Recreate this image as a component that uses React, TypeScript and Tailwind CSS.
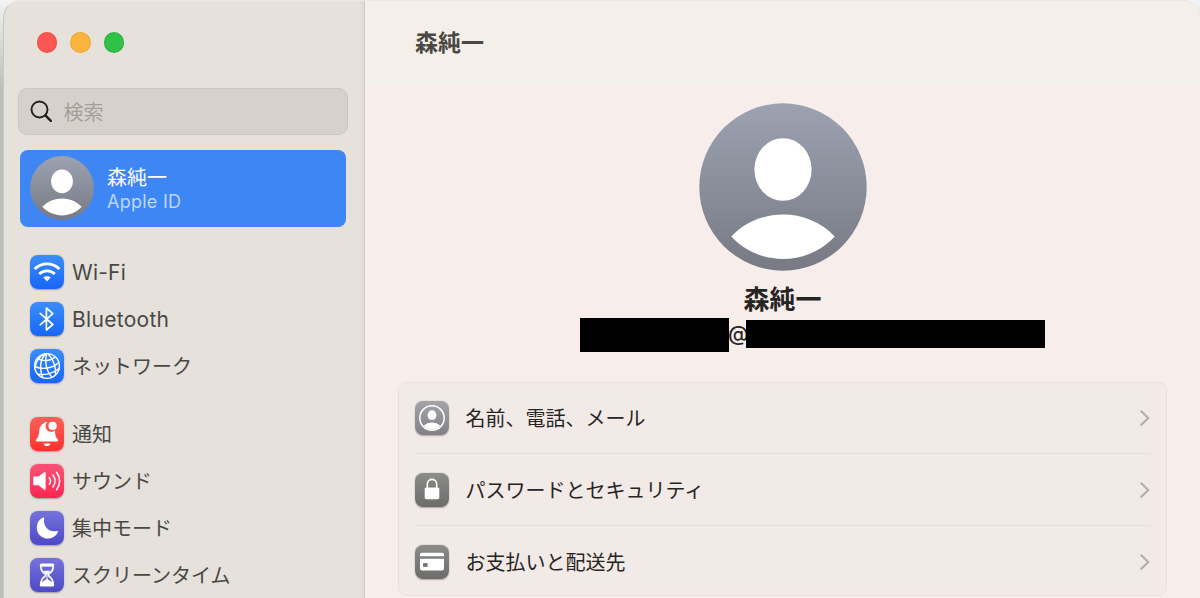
import { useId, useState } from "react";
import type { ReactNode } from "react";

type NavItem = {
  id: string;
  label: string;
  color: string;
  textStyle?: string;
  icon: ReactNode;
};

type SettingRow = {
  label: string;
  color: string;
  icon: ReactNode;
};

const blue = "from-[#3b8dfb] to-[#1766f8]";
const red = "from-[#fb5f58] to-[#fd2f2c]";
const pink = "from-[#fc5079] to-[#fc2450]";
const purple = "from-[#7672dc] to-[#4e49c6]";
const gray = "from-[#8c8c8b] to-[#6c6c6b]";

const WifiIcon = () => (
  <svg viewBox="0 0 34 34" className="size-full" fill="none" stroke="white" strokeWidth="2.8">
    <path d="M4.6 14C11.5 7.2 22.5 7.2 29.4 14" />
    <path d="M9.2 19C13.6 14.8 20.4 14.8 24.8 19" />
    <path d="M17 26.3l-3.7-3.8c2-1.7 5.4-1.7 7.4 0z" fill="white" stroke="none" />
  </svg>
);

const BluetoothIcon = () => (
  <svg viewBox="0 0 34 34" className="size-full" fill="none" stroke="white" strokeWidth="1.7" strokeLinejoin="round" strokeLinecap="round">
    <path d="M10.2 11.3l12.6 11.2L16.4 28V6l6.4 5.6-12.6 11.2" />
  </svg>
);

const GlobeIcon = () => (
  <svg viewBox="0 0 34 34" className="size-full" fill="none" stroke="white" strokeWidth="1.4">
    <circle cx="17" cy="17" r="12.4" />
    <path d="M15.8 4.7C10.5 9.5 9 18.5 12.6 28.5M16.5 4.7C14.5 12 16 22 22 28.3M18 4.7C23 10 26 17 25.5 25.5M15.5 5C9 7 5.8 12 5 19" />
    <path d="M7.5 9.2C12 12.6 20 12.5 25.2 8M4.8 17.5C12 21 23 19.5 28.7 13.5M7.5 25C14 26.5 23 25 29 19.5" />
  </svg>
);

const BellIcon = () => (
  <svg viewBox="0 0 34 34" className="size-full" fill="white">
    <path d="M17.3 5.1a5.6 5.6 0 0 0 7.6 8.3c.3 4.8 1 7.1 2.9 8.8.8.8.3 2.3-.9 2.3H7.1c-1.2 0-1.7-1.5-.9-2.3 2-1.7 2.7-4 3-8.5.3-4.1 2.6-6.600 5.100-7.600.4-1 1.500-1.500 3-1z" />
    <circle cx="22.6" cy="8.9" r="4.1" />
    <path d="M13.6 26.4h6.8c-.5 1.8-1.7 2.7-3.4 2.7s-2.9-.9-3.4-2.7z" />
  </svg>
);

const SoundIcon = () => (
  <svg viewBox="0 0 34 34" className="size-full" fill="none" stroke="white" strokeWidth="1.5" strokeLinecap="round">
    <path d="M4.5 12.6h4L14.2 8.3c.7-.5 1.4-.2 1.4.7v16c0 .9-.7 1.2-1.4.7l-5.700-4.500h-4c-.8 0-1.300-.5-1.300-1.300v-6c0-.8.5-1.300 1.300-1.300z" fill="white" stroke="none" />
    <path d="M19.3 13.7c1.5 2 1.5 4.6 0 6.6M22.9 11c2.8 3.6 2.8 8.4 0 12M26.6 8.3c4 5.2 4 12.2 0 17.4" />
  </svg>
);

const MoonIcon = () => (
  <svg viewBox="0 0 34 34" className="size-full" fill="white">
    <path d="M13.2 6.5c.6-.3 1.2.2 1 .8-1.5 7.6 4.2 14.6 12.8 12.7.7-.1 1.2.4.9 1.1-1.6 4-5.5 6.5-9.9 6.5-6.3 0-11.2-4.7-11.2-10.9 0-4.500 2.400-8.500 6.400-10.200z" />
  </svg>
);

const HourglassIcon = () => (
  <svg viewBox="0 0 34 34" className="size-full" fill="none" stroke="white" strokeWidth="1.7">
    <path d="M10.8 7.5c0 5 1.5 6.3 4.2 8.3.8.6.8 1.8 0 2.4-2.7 2-4.2 3.8-4.2 8.3h12.4c0-4.5-1.5-6.3-4.2-8.3-.8-.6-.8-1.8 0-2.4 2.7-2 4.2-3.3 4.2-8.3z" />
    <path d="M11.3 7h11.4M11.3 27h11.4" strokeWidth="3.2" strokeLinecap="round" />
    <path d="M13.5 12.8h7L17.5 16v5l4.7 3.3v2.4H11.8v-2.400l4.700-3.300v-5z" fill="white" stroke="none" />
  </svg>
);

const ContactIcon = () => (
  <svg viewBox="0 0 34 34" className="size-full" fill="white">
    <circle cx="17" cy="17" r="12.2" fill="none" stroke="white" strokeWidth="1.5" />
    <ellipse cx="17" cy="14.2" rx="4.4" ry="4.9" />
    <path d="M8.8 24.8c4.5-4.3 11.9-4.3 16.4 0-4.6 5-11.8 5-16.4 0z" />
  </svg>
);

const LockIcon = () => (
  <svg viewBox="0 0 34 34" className="size-full" fill="none" stroke="white">
    <rect x="9.7" y="14.4" width="14.6" height="11.8" rx="1.7" fill="white" stroke="none" />
    <path d="M12.3 15.5v-4.2c0-6.6 9.4-6.6 9.4 0v4.2" strokeWidth="1.6" />
  </svg>
);

const CardIcon = () => (
  <svg viewBox="0 0 34 34" className="size-full" fill="white">
    <path d="M5 11.2V10c0-1.5.8-2.2 2.2-2.2h19.600c1.400 0 2.200.7 2.200 2.200v1.200z" />
    <path fillRule="evenodd" d="M5 13.8h24v9.4c0 1.5-.8 2.2-2.2 2.2H7.2c-1.400 0-2.200-.7-2.200-2.200zM8.800 18c-.5 0-.8.3-.8.8v2.400c0 .5.3.8.8.8h3.100c.5 0 .8-.3.8-.8v-2.400c0-.5-.3-.8-.8-.8z" />
  </svg>
);

const navGroups: NavItem[][] = [
  [
    { id: "wifi", label: "Wi-Fi", color: blue, textStyle: "text-[21px] tracking-[0.2px]", icon: <WifiIcon /> },
    { id: "bluetooth", label: "Bluetooth", color: blue, textStyle: "text-[21px] tracking-[0.3px]", icon: <BluetoothIcon /> },
    { id: "network", label: "ネットワーク", color: blue, icon: <GlobeIcon /> },
  ],
  [
    { id: "notifications", label: "通知", color: red, icon: <BellIcon /> },
    { id: "sound", label: "サウンド", color: pink, icon: <SoundIcon /> },
    { id: "focus", label: "集中モード", color: purple, icon: <MoonIcon /> },
    { id: "screentime", label: "スクリーンタイム", color: purple, icon: <HourglassIcon /> },
  ],
];

const rows: SettingRow[] = [
  { label: "名前、電話、メール", color: "from-[#a5a4aa] to-[#818086]", icon: <ContactIcon /> },
  { label: "パスワードとセキュリティ", color: gray, icon: <LockIcon /> },
  { label: "お支払いと配送先", color: gray, icon: <CardIcon /> },
];

const Avatar = ({ className }: { className: string }) => {
  const id = useId();
  return (
    <svg viewBox="0 0 168 168" className={className}>
      <defs>
        <linearGradient id={id} x1="0" y1="0" x2="0" y2="1">
          <stop offset="0" stopColor="#9ca2b1" />
          <stop offset="1" stopColor="#777a83" />
        </linearGradient>
      </defs>
      <circle cx="84" cy="84" r="83.7" fill={`url(#${id})`} />
      <ellipse cx="84" cy="66.5" rx="28.6" ry="31.3" fill="white" />
      <path d="M32.3 133.5C60 104.3 108 104.3 135.7 133.5C108 163.5 60 163.5 32.3 133.5Z" fill="white" />
    </svg>
  );
};

const IconTile = ({ color, children }: { color: string; children: ReactNode }) => (
  <span className={`size-[34px] shrink-0 rounded-[8px] bg-linear-to-b shadow-[0_0.5px_1.5px_rgba(0,0,0,0.3)] ${color}`}>
    {children}
  </span>
);

const App = () => {
  const [query, setQuery] = useState("");

  return (
    <div className="h-[598px] w-[1200px] overflow-hidden bg-linear-to-b from-[#f3f3f3] to-[#bcbcbe] to-15% pl-[3px] font-['Inter','Noto_Sans_CJK_JP',sans-serif]">
      <div className="flex h-[620px] overflow-hidden rounded-t-[18px] border-t border-l border-t-[#e9e7e4] border-l-[#c9c7c4] bg-[#e6e1db]">
        {/* Sidebar */}
        <aside className="flex w-[361px] shrink-0 flex-col border-r border-[#d2cdc8] pl-[14px] shadow-[inset_-4px_0_4px_-3px_rgba(0,0,0,0.06)]">
          <div className="mt-[31px] ml-[18.5px] flex gap-[13px]">
            <span className="size-[20.5px] rounded-full border border-[#e0443e]/50 bg-[#fc5753]" />
            <span className="size-[20.5px] rounded-full border border-[#de9e34]/60 bg-[#fdb43e]" />
            <span className="size-[20.5px] rounded-full border border-[#24a83a]/60 bg-[#30c148]" />
          </div>

          <label className="mt-[35px] flex h-[47px] w-[330px] items-center gap-[11px] rounded-[9px] border border-[#ccc7c1] bg-[#d7d1cb] pl-[10.5px]">
            <svg viewBox="0 0 23 23" className="size-[23px]" fill="none" stroke="#20201f" strokeLinecap="round">
              <circle cx="9.5" cy="9.5" r="8" strokeWidth="1.9" />
              <path d="M15.4 15.4l5.4 5.4" strokeWidth="2.5" />
            </svg>
            <input
              value={query}
              onChange={(e) => setQuery(e.target.value)}
              placeholder="検索"
              className="w-[250px] bg-transparent pt-[3px] text-[20px] outline-none placeholder:text-[#a49f9a]"
            />
          </label>

          <div className="mt-[15px] ml-[2px] flex h-[77px] w-[326px] shrink-0 items-center rounded-[8px] bg-[#3f86f5] pl-[10px]">
            <Avatar className="size-[64px]" />
            <div className="ml-[13px] pt-[2px] text-white">
              <p className="text-[20px] leading-[26px]">森純一</p>
              <p className="text-[18px] leading-[22px] tracking-[0.25px] text-[#bdd6fc]">Apple ID</p>
            </div>
          </div>

          <nav className="mt-[28px] ml-[12px] flex flex-col gap-[34px]">
            {navGroups.map((group, index) => (
              <ul key={index} className="flex flex-col gap-[13px]">
                {group.map((item) => (
                  <li key={item.id} className="flex h-[34px] items-center gap-[8px] text-[20px] text-[#4a4845]">
                    <IconTile color={item.color}>{item.icon}</IconTile>
                    <span className={`pt-[2px] whitespace-nowrap ${item.textStyle ?? ""}`}>{item.label}</span>
                  </li>
                ))}
              </ul>
            ))}
          </nav>
        </aside>

        {/* Account details */}
        <main className="flex min-w-0 flex-1 flex-col bg-[#f7eeeb]">
          <header className="h-[84px] shrink-0 bg-[#f4efe8] pt-[25px] pl-[50px]">
            <h1 className="text-[23px] leading-[34px] font-bold text-[#4a4744]">森純一</h1>
          </header>

          <div className="mt-[17.5px] flex flex-col items-center">
            <Avatar className="size-[168px]" />
            <h2 className="mt-[11.5px] text-[26px] leading-[36px] font-bold text-[#272523]">森純一</h2>
          </div>

          <div className="ml-[215px] flex h-[34px] items-start">
            <span className="h-[34px] w-[149px] bg-black" />
            <span className="-ml-px w-[18px] pt-[5px] text-[21px] leading-none font-medium text-[#272523]">@</span>
            <span className="z-10 mt-[2px] h-[28px] w-[299px] bg-black" />
          </div>

          <ul className="mt-[30px] ml-[33px] flex h-[214px] w-[769px] shrink-0 flex-col divide-y divide-[#e6dfdc] rounded-[9px] border border-[#e9e1de] bg-[#f2eae7] px-[16px]">
            {rows.map((row) => (
              <li key={row.label} className="flex h-[72px] shrink-0 items-center text-[20px] text-[#272523] first:h-[71px]">
                <IconTile color={row.color}>{row.icon}</IconTile>
                <span className="ml-[16.5px] pt-[2px]">{row.label}</span>
                <svg viewBox="0 0 10 16" className="ml-auto h-[16px] w-[10px]" fill="none" stroke="#b5aeac" strokeWidth="2.2" strokeLinecap="round" strokeLinejoin="round">
                  <path d="M1.3 1.3L8.3 8l-7 6.7" />
                </svg>
              </li>
            ))}
          </ul>
        </main>
      </div>
    </div>
  );
};

export default App;
